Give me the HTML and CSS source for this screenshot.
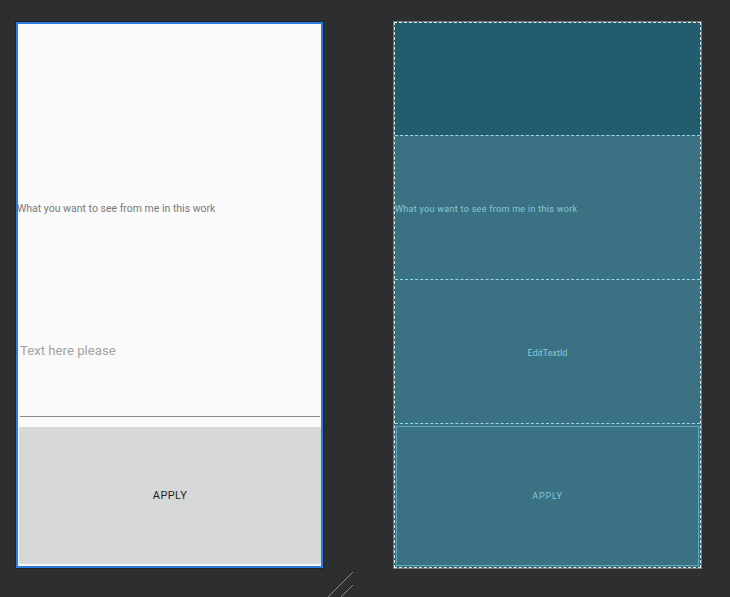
FILE: index.html
```html
<!DOCTYPE html>
<html>
<head>
<meta charset="utf-8">
<link rel="stylesheet" href="styles.css">
</head>
<body>
<div class="canvas">
  <div class="design">
    <div class="spacer"></div>
    <div class="tv"><span>What you want to see from me in this work</span></div>
    <div class="et">
      <div class="et-text">Text here please</div>
      <div class="et-line"></div>
    </div>
    <div class="btnwrap"><div class="btn">APPLY</div></div>
  </div>
  <div class="blueprint">
    <div class="bp-spacer"></div>
    <div class="bp-sec bp-left">What you want to see from me in this work</div>
    <div class="bp-sec bp-center">EditTextId</div>
    <div class="bp-sec bp-btn"><div class="bp-btn-inner">APPLY</div></div>
  </div>
</div>
<svg class="resize" width="30" height="30" viewBox="0 0 30 30">
  <line x1="28" y1="0" x2="3" y2="25" stroke="#8a8a8a" stroke-width="1"/>
  <line x1="28" y1="13" x2="15" y2="26" stroke="#8a8a8a" stroke-width="1"/>
</svg>
</body>
</html>
```
FILE: styles.css
```css
html, body {
  margin: 0;
  padding: 0;
  background: #2d2e30;
  width: 730px;
  height: 597px;
  overflow: hidden;
}
.canvas {
  display: flex;
  gap: 71px;
  padding: 22px 0 0 16px;
}
.design {
  width: 307px;
  height: 546px;
  box-sizing: border-box;
  border: 2px solid #2b7be2;
  background: #fafafa;
  display: flex;
  flex-direction: column;
  font-family: Roboto, "Liberation Sans", sans-serif;
  box-shadow: 0 0 0 1px rgba(0,0,0,0.25);
}
.spacer { height: 112px; }
.tv {
  height: 144px;
  display: flex;
  align-items: center;
  font-size: 10.5px;
  color: #7a7a7a;
  margin-left: -1px;
}
.et {
  height: 144px;
  display: flex;
  flex-direction: column;
  padding: 0 1px 0 2px;
}
.et-text {
  font-size: 13.2px;
  color: #a3a3a3;
  margin-top: 63px;
  height: 17px;
}
.et-line {
  margin-top: 56px;
  height: 1px;
  background: #8a8a8a;
}
.btnwrap {
  flex: 1;
  padding: 3px 0 3px 1px;
  display: flex;
}
.btn {
  flex: 1;
  background: #d6d7d7;
  display: flex;
  align-items: center;
  justify-content: center;
  font-size: 11px;
  font-weight: 400;
  letter-spacing: 0.4px;
  color: #1e1e1e;
  border-radius: 1px;
  box-shadow: 0 1px 1px rgba(0,0,0,0.12);
}
.blueprint {
  width: 307px;
  height: 546px;
  box-sizing: border-box;
  border: 1px dashed #e8eef0;
  outline: 1px solid rgba(255,255,255,0.35);
  background: #235c6d;
  display: flex;
  flex-direction: column;
  font-family: Roboto, "DejaVu Sans", sans-serif;
  font-size: 9px;
  color: #86c8d9;
}
.bp-spacer { height: 112px; }
.bp-sec {
  height: 144px;
  box-sizing: border-box;
  background: #3a7283;
  border-top: 1px dashed #8fdcef;
  display: flex;
  align-items: center;
  padding-top: 2px;
}
.bp-left {
  letter-spacing: 0.3px;
}
.bp-center {
  justify-content: center;
}
.bp-btn {
  flex: 1;
  height: auto;
  padding: 2px 1px 1px 1px;
  align-items: stretch;
}
.bp-btn-inner {
  flex: 1;
  border: 1px solid #5fa9bd;
  display: flex;
  align-items: center;
  justify-content: center;
  letter-spacing: 0.8px;
}
.resize {
  position: absolute;
  left: 325px;
  top: 572px;
}
```
